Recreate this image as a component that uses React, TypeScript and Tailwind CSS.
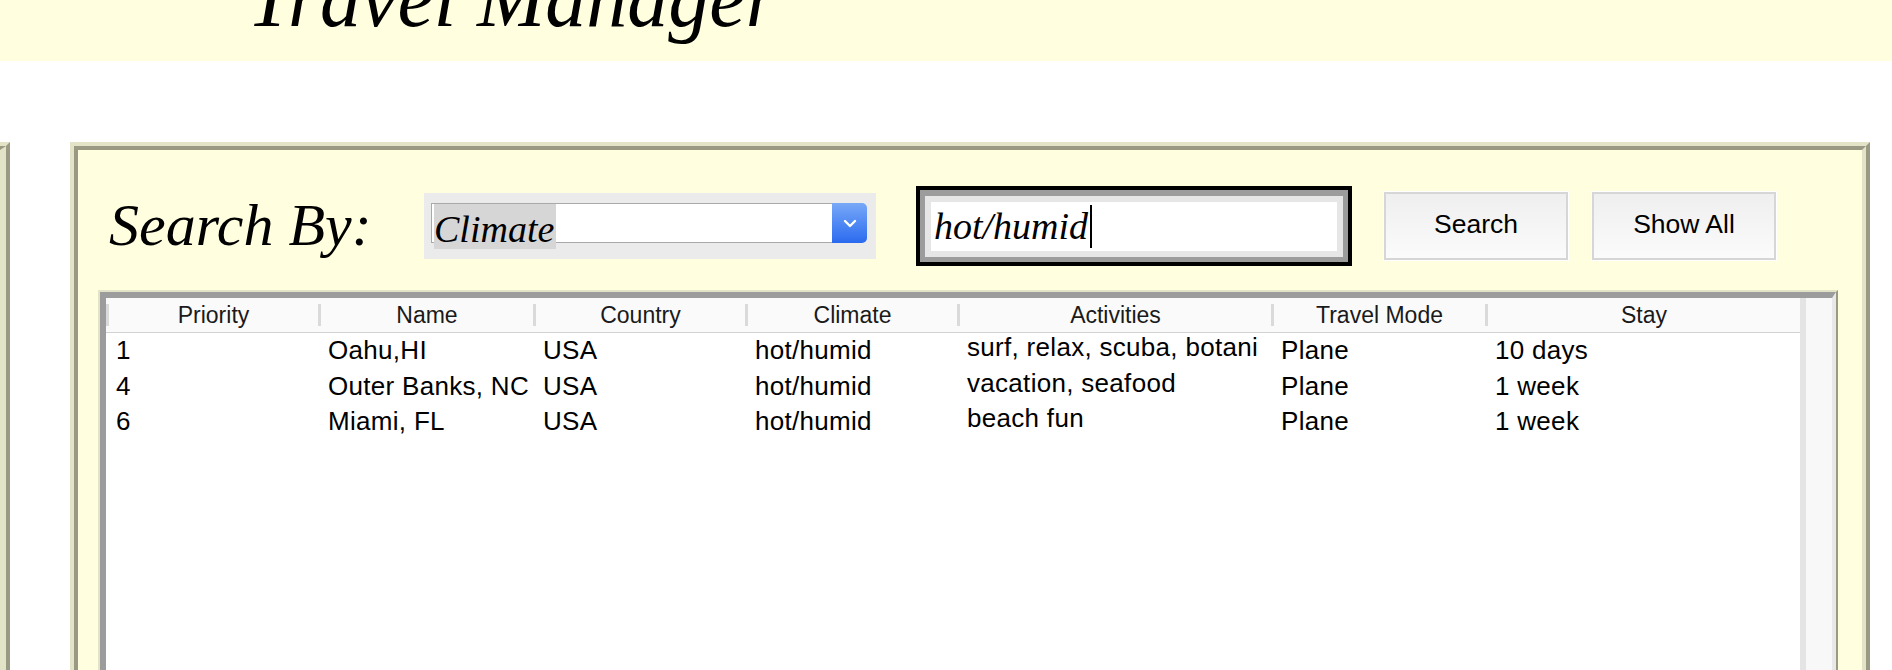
import React from "react";

const columns = [
  { title: "Priority", w: "w-[212px]" },
  { title: "Name", w: "w-[215px]" },
  { title: "Country", w: "w-[212px]" },
  { title: "Climate", w: "w-[212px]" },
  { title: "Activities", w: "w-[314px]" },
  { title: "Travel Mode", w: "w-[214px]" },
  { title: "Stay", w: "w-[315px]" },
];

const rows = [
  ["1", "Oahu,HI", "USA", "hot/humid", "surf, relax, scuba, botani", "Plane", "10 days"],
  ["4", "Outer Banks, NC", "USA", "hot/humid", "vacation, seafood", "Plane", "1 week"],
  ["6", "Miami, FL", "USA", "hot/humid", "beach fun", "Plane", "1 week"],
];

function Chevron() {
  return (
    <svg width="14" height="9" viewBox="0 0 14 9" fill="none">
      <polyline points="2,2 7,7 12,2" stroke="white" strokeWidth="2.4" strokeLinecap="round" strokeLinejoin="round" />
    </svg>
  );
}

function SelectBox() {
  return (
    <div className="w-[452px] h-[66px] bg-[#ebebeb] pl-[7px] pt-[10px] shrink-0">
      <div className="flex h-[40px] w-[436px]">
        <div className="flex-1 h-[40px] border border-r-0 border-[#a9a9a9] bg-white flex items-start">
          <div className="ml-[2px] h-[45px] w-[122px] shrink-0 bg-[#d6d6d6] font-['Liberation_Serif',serif] italic text-[38px] leading-[50px] text-black whitespace-nowrap">
            Climate
          </div>
        </div>
        <div className="w-[35px] h-[40px] rounded-r-[5px] bg-gradient-to-b from-[#78a8f7] to-[#2a69ef] flex items-center justify-center">
          <Chevron />
        </div>
      </div>
    </div>
  );
}

function TextField() {
  return (
    <div className="ml-[40px] w-[436px] h-[80px] border-4 border-black shrink-0">
      <div className="h-full border-[5px] border-t-[6px] border-[#9c9c9c]">
        <div className="h-full border-[6px] border-[#e6e6e6] bg-white flex items-center pl-[3px]">
          <span className="font-['Liberation_Serif',serif] italic text-[38px] leading-[49px] text-black whitespace-nowrap">
            hot/humid
          </span>
          <span className="ml-[2px] w-[2px] h-[43px] bg-black" />
        </div>
      </div>
    </div>
  );
}

function Btn({ label, className }: { label: string; className: string }) {
  return (
    <div
      className={
        "w-[184px] h-[68px] border-2 border-[#d6d6d6] shadow-[0_0_0_1px_#ffffff] bg-gradient-to-b from-[#efefef] to-[#fbfbfb] flex items-center justify-center pb-[2px] font-['Liberation_Sans',sans-serif] text-[26.5px] text-black shrink-0 " +
        className
      }
    >
      {label}
    </div>
  );
}

function Table() {
  return (
    <div className="ml-[20px] w-[1740px] h-[420px] border-t-2 border-l-2 border-[#e3e3c8] border-r-2 border-r-[#9a9a84] flex">
      <div className="flex-1 flex border-t-[6px] border-l-[6px] border-[#9c9c9c] border-r-4 border-r-[#e8e8e8] bg-white">
        <div className="w-[1694px] flex flex-col">
          <div className="h-[35px] flex border-b border-[#d2d2d2] bg-[#fafafa] font-['Liberation_Sans',sans-serif] text-[23px] text-[#1a1a1a]">
            {columns.map((c) => (
              <div key={c.title} className={"flex items-center " + c.w}>
                <div className="w-[3px] h-[22px] bg-[#dadada]" />
                <div className="flex-1 text-center whitespace-nowrap">{c.title}</div>
              </div>
            ))}
          </div>
          {rows.map((r, i) => (
            <div key={i} className="h-[35.5px] flex font-['Liberation_Sans',sans-serif] text-[26px] tracking-[0.3px] text-black">
              {r.map((cell, j) => (
                <div
                  key={j}
                  className={
                    "flex items-center pl-[10px] whitespace-nowrap overflow-hidden " +
                    columns[j].w +
                    (j === 4 ? " pb-[6px]" : "")
                  }
                >
                  {cell}
                </div>
              ))}
            </div>
          ))}
        </div>
        <div className="w-[32px] border-l-[6px] border-[#e4e4e4] bg-[#f8f8f8]" />
      </div>
    </div>
  );
}

export default function App() {
  return (
    <div className="w-[1892px] h-[670px] overflow-hidden bg-white">
      <div className="h-[61px] bg-[#ffffe0] overflow-hidden">
        <div className="pl-[247px] mt-[-40px] font-['Liberation_Serif',serif] italic text-[82px] leading-[78px] text-black whitespace-nowrap">
          Travel Manager
        </div>
      </div>
      <div className="flex mt-[81px]">
        <div className="w-[10px] h-[600px] border-t-4 border-[#e3e3c8] border-r-4 border-r-[#9a9a84] shrink-0">
          <div className="h-full border-t-4 border-[#9a9a84] border-r-[6px] border-r-[#e3e3c8]" />
        </div>
        <div className="ml-[60px] w-[1800px] h-[600px] border-4 border-t-[#e3e3c8] border-l-[#e3e3c8] border-r-[#9a9a84] border-b-[#9a9a84] shrink-0">
          <div className="h-full border-4 border-t-[#9a9a84] border-l-[#9a9a84] border-r-[#e3e3c8] border-b-[#e3e3c8] bg-[#ffffe0]">
            <div className="flex items-center h-[80px] mt-[36px]">
              <div className="w-[346px] pl-[31px] pb-[2px] shrink-0 font-['Liberation_Serif',serif] italic text-[60px] leading-none text-black whitespace-nowrap">
                Search By:
              </div>
              <SelectBox />
              <TextField />
              <Btn label="Search" className="ml-[32px]" />
              <Btn label="Show All" className="ml-[24px]" />
            </div>
            <div className="mt-[24px]">
              <Table />
            </div>
          </div>
        </div>
      </div>
    </div>
  );
}
